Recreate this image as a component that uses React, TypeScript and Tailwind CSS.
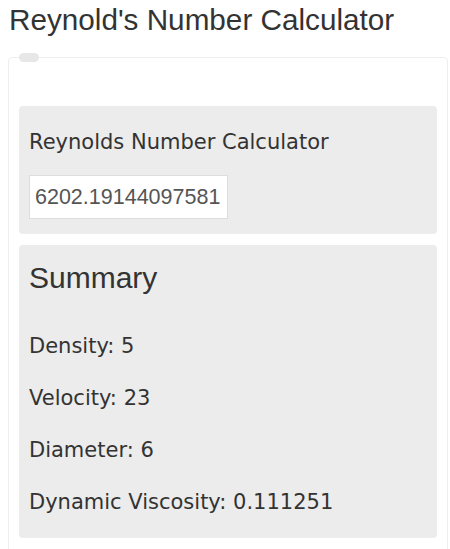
export default function App() {
  const summary = [
    { label: "Density", value: "5" },
    { label: "Velocity", value: "23" },
    { label: "Diameter", value: "6" },
    { label: "Dynamic Viscosity", value: "0.111251" },
  ]

  return (
    <div className="min-h-[549px] bg-white pl-2 pr-[2px] pt-[2px] text-[#333]">
      <h1 className="pl-[1px] font-['Liberation_Sans',Arial,sans-serif] text-[29.7px] leading-[36px] text-[#333]">
        Reynold's Number Calculator
      </h1>

      <div className="relative mt-[19px] rounded border border-[#eeeeee] px-[10px] pb-[20px] pt-[48px]">
        <span className="absolute left-[10px] top-[-5px] h-[9px] w-[20px] rounded-full bg-[#e6e7e6]" />

        <div className="flex flex-col gap-[11px]">
          <div className="rounded bg-[#ebeceb] px-[10px] pb-[15px] pt-[21px]">
            <p className="font-['DejaVu_Sans',sans-serif] text-[21px] leading-[30px] text-[#333]">
              Reynolds Number Calculator
            </p>
            <input
              readOnly
              value="6202.19144097581"
              className="mt-[18px] block h-[44px] w-[199px] border border-[#dddddd] bg-white px-[5px] font-['Liberation_Sans',Arial,sans-serif] text-[21.5px] text-[#555] outline-none"
            />
          </div>

          <div className="rounded bg-[#ebeceb] px-[10px] pb-[21px] pt-[15px]">
            <h2 className="font-['Liberation_Sans',Arial,sans-serif] text-[30px] leading-[36px] text-[#333]">
              Summary
            </h2>
            <div className="mt-[35px] flex flex-col gap-[22px]">
              {summary.map((item) => (
                <p key={item.label} className="font-['DejaVu_Sans',sans-serif] text-[21px] leading-[30px] text-[#333]">
                  {item.label}: {item.value}
                </p>
              ))}
            </div>
          </div>
        </div>
      </div>
    </div>
  )
}
